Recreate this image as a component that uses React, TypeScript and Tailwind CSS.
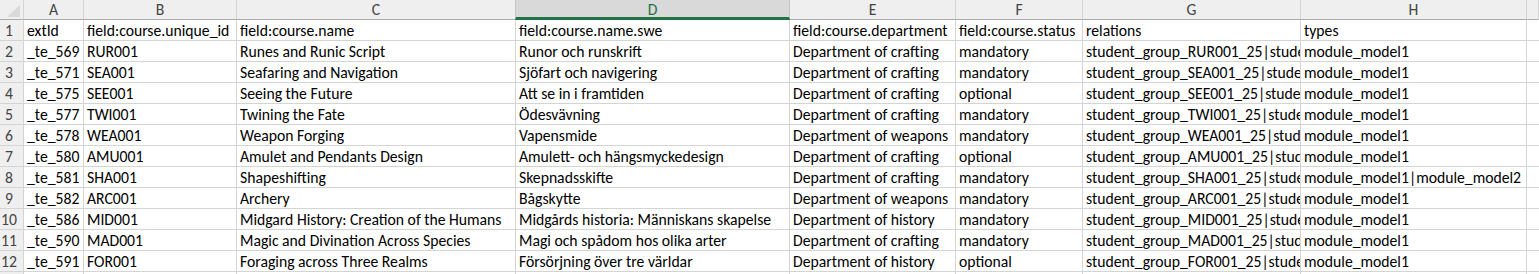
import React from "react";

const cols = ["A", "B", "C", "D", "E", "F", "G", "H", ""];
const widths = "24px 60px 153px 279px 274px 166px 127px 218px 226px 1fr";

const rows: string[][] = [
  ["extId", "field:course.unique_id", "field:course.name", "field:course.name.swe", "field:course.department", "field:course.status", "relations", "types"],
  ["_te_569", "RUR001", "Runes and Runic Script", "Runor och runskrift", "Department of crafting", "mandatory", "student_group_RUR001_25|student_group_RUR001_26", "module_model1"],
  ["_te_571", "SEA001", "Seafaring and Navigation", "Sjöfart och navigering", "Department of crafting", "mandatory", "student_group_SEA001_25|student_group_SEA001_26", "module_model1"],
  ["_te_575", "SEE001", "Seeing the Future", "Att se in i framtiden", "Department of crafting", "optional", "student_group_SEE001_25|student_group_SEE001_26", "module_model1"],
  ["_te_577", "TWI001", "Twining the Fate", "Ödesvävning", "Department of crafting", "mandatory", "student_group_TWI001_25|student_group_TWI001_26", "module_model1"],
  ["_te_578", "WEA001", "Weapon Forging", "Vapensmide", "Department of weapons", "mandatory", "student_group_WEA001_25|student_group_WEA001_26", "module_model1"],
  ["_te_580", "AMU001", "Amulet and Pendants Design", "Amulett- och hängsmyckedesign", "Department of crafting", "optional", "student_group_AMU001_25|student_group_AMU001_26", "module_model1"],
  ["_te_581", "SHA001", "Shapeshifting", "Skepnadsskifte", "Department of crafting", "mandatory", "student_group_SHA001_25|student_group_SHA001_26", "module_model1|module_model2"],
  ["_te_582", "ARC001", "Archery", "Bågskytte", "Department of weapons", "mandatory", "student_group_ARC001_25|student_group_ARC001_26", "module_model1"],
  ["_te_586", "MID001", "Midgard History: Creation of the Humans", "Midgårds historia: Människans skapelse", "Department of history", "mandatory", "student_group_MID001_25|student_group_MID001_26", "module_model1"],
  ["_te_590", "MAD001", "Magic and Divination Across Species", "Magi och spådom hos olika arter", "Department of crafting", "mandatory", "student_group_MAD001_25|student_group_MAD001_26", "module_model1"],
  ["_te_591", "FOR001", "Foraging across Three Realms", "Försörjning över tre världar", "Department of history", "optional", "student_group_FOR001_25|student_group_FOR001_26", "module_model1"],
  ["", "", "", "", "", "", "", ""],
];

export default function App() {
  return (
    <div
      className="w-[1539px] h-[274px] overflow-hidden bg-white text-black"
      style={{ fontFamily: "Carlito, Calibri, 'Liberation Sans', sans-serif" }}
    >
      <div className="grid" style={{ gridTemplateColumns: widths }}>
        <div className="h-[20px] bg-[#efefef] border-r border-b border-r-[#d4d4d4] border-b-[#ababab] relative">
          <svg className="absolute left-0 top-0" width="23" height="19" viewBox="0 0 23 19">
            <polygon points="7,17 20,17 20,5" fill="#d9d9d9" />
          </svg>
        </div>
        {cols.map((c, i) =>
          c === "D" ? (
            <div
              key={i}
              className="h-[20px] bg-[#d9d9d9] border-r border-r-[#c6c6c6] border-l border-l-[#c6c6c6] -ml-px border-b-[3px] border-b-[#217346] text-[#217346] text-[15.7px] leading-[19px] text-center"
            >
              {c}
            </div>
          ) : (
            <div
              key={i}
              className="h-[20px] bg-[#efefef] border-r border-b border-r-[#d4d4d4] border-b-[#ababab] text-[#444] text-[15.7px] leading-[19px] text-center"
            >
              {c}
            </div>
          )
        )}
        {rows.map((r, ri) => (
          <React.Fragment key={ri}>
            <div className="h-[21px] bg-[#efefef] border-r border-b border-[#d4d4d4] text-[#444] text-[15.7px] leading-[22px] pr-[5px] text-center overflow-hidden">
              {ri + 1}
            </div>
            {r.map((v, ci) => (
              <div
                key={ci}
                className="h-[21px] border-r border-b border-[#d4d4d4] text-[15.7px] leading-[22px] pl-[3px] whitespace-nowrap overflow-hidden"
              >
                {v}
              </div>
            ))}
            <div className="h-[21px] border-b border-[#d4d4d4]" />
          </React.Fragment>
        ))}
      </div>
    </div>
  );
}
